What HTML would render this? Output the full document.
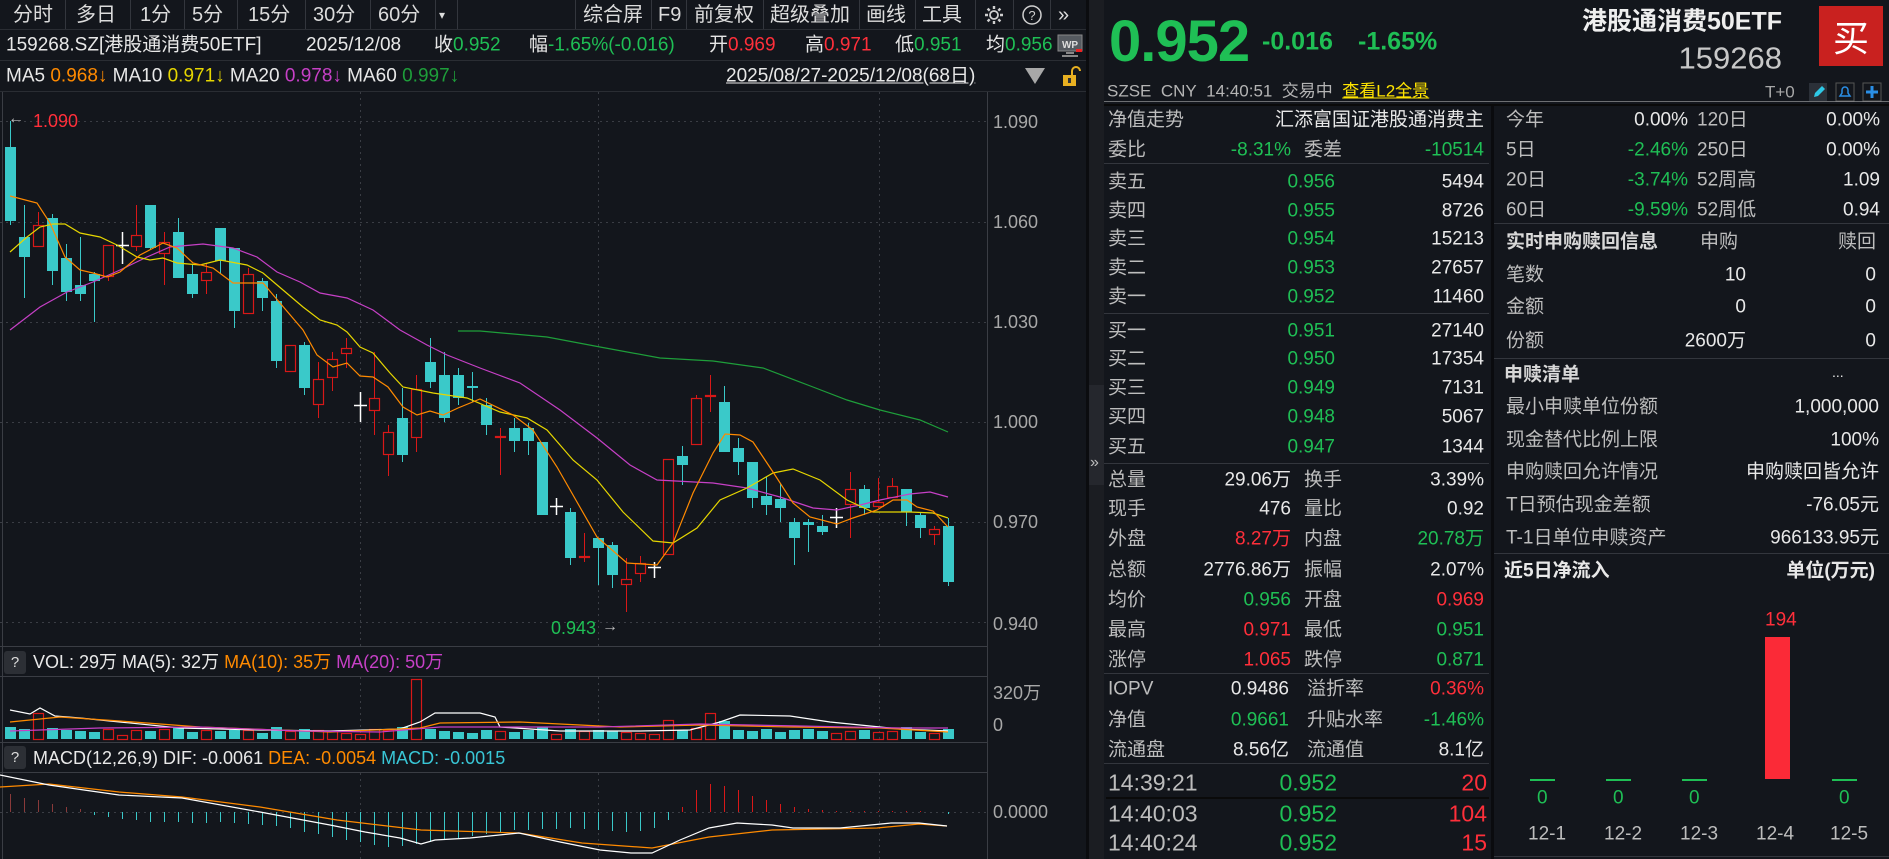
<!DOCTYPE html>
<html><head><meta charset="utf-8">
<style>
*{margin:0;padding:0;box-sizing:border-box}
body{width:1889px;height:859px;background:#13161c;overflow:hidden;position:relative;font-family:"Liberation Sans","Noto Sans CJK SC",sans-serif;color:#e6e6e6}
.t{position:absolute;white-space:nowrap;line-height:1;transform:translateY(-50%)}
.r{text-align:right}
.g{color:#1fbf55}.rd{color:#ff2f3a}.gy{color:#bdbdbd}.w{color:#e8e8e8}
.hl{position:absolute;height:1px;background:#33363d}
.vl{position:absolute;width:1px;background:#33363d}
.ob{font-size:19px}
</style></head><body>

<!-- toolbar -->
<div class="hl" style="left:0;top:29px;width:1086px;background:#2a2d33"></div>
<div class="vl" style="left:65px;top:0;height:29px"></div>
<div class="vl" style="left:130px;top:0;height:29px"></div>
<div class="vl" style="left:184px;top:0;height:29px"></div>
<div class="vl" style="left:237px;top:0;height:29px"></div>
<div class="vl" style="left:305px;top:0;height:29px"></div>
<div class="vl" style="left:370px;top:0;height:29px"></div>
<div class="vl" style="left:435px;top:0;height:29px"></div>
<div class="vl" style="left:457px;top:0;height:29px"></div>
<div class="vl" style="left:575px;top:0;height:29px"></div>
<div class="vl" style="left:651px;top:0;height:29px"></div>
<div class="vl" style="left:686px;top:0;height:29px"></div>
<div class="vl" style="left:763px;top:0;height:29px"></div>
<div class="vl" style="left:859px;top:0;height:29px"></div>
<div class="vl" style="left:915px;top:0;height:29px"></div>
<div class="vl" style="left:975px;top:0;height:29px"></div>
<div class="vl" style="left:1013px;top:0;height:29px"></div>
<div class="vl" style="left:1050px;top:0;height:29px"></div>
<div style="font-size:20px;color:#dcdcdc">
<span class="t" style="left:13px;top:15px">分时</span>
<span class="t" style="left:76px;top:15px">多日</span>
<span class="t" style="left:140px;top:15px">1分</span>
<span class="t" style="left:192px;top:15px">5分</span>
<span class="t" style="left:248px;top:15px">15分</span>
<span class="t" style="left:313px;top:15px">30分</span>
<span class="t" style="left:378px;top:15px">60分</span>
<span class="t" style="left:439px;top:15px;font-size:12px">▾</span>
<span class="t" style="left:583px;top:15px">综合屏</span>
<span class="t" style="left:658px;top:15px">F9</span>
<span class="t" style="left:694px;top:15px">前复权</span>
<span class="t" style="left:770px;top:15px">超级叠加</span>
<span class="t" style="left:866px;top:15px">画线</span>
<span class="t" style="left:922px;top:15px">工具</span>
<span class="t" style="left:1058px;top:15px">»</span>
</div>
<svg style="position:absolute;left:982px;top:4px" width="24" height="22" viewBox="0 0 24 22"><circle cx="12" cy="11" r="4" fill="none" stroke="#cfcfcf" stroke-width="1.8"/><path d="M12 2v3M12 17v3M3 11h3M18 11h3M5.6 4.6l2.1 2.1M16.3 15.3l2.1 2.1M5.6 17.4l2.1-2.1M16.3 6.7l2.1-2.1" stroke="#cfcfcf" stroke-width="2.4"/></svg>
<svg style="position:absolute;left:1020px;top:4px" width="24" height="22"><circle cx="12" cy="11" r="9" fill="none" stroke="#cfcfcf" stroke-width="1.5"/><text x="12" y="16" text-anchor="middle" font-size="13" fill="#cfcfcf" font-family="Liberation Sans">?</text></svg>

<!-- info line -->
<div style="font-size:19px">
<span class="t w" style="left:6px;top:45px">159268.SZ[港股通消费50ETF]</span>
<span class="t w" style="left:306px;top:45px">2025/12/08</span>
<span class="t" style="left:434px;top:45px">收<span class="g">0.952</span></span>
<span class="t" style="left:529px;top:45px">幅<span class="g">-1.65%(-0.016)</span></span>
<span class="t" style="left:709px;top:45px">开<span class="rd">0.969</span></span>
<span class="t" style="left:805px;top:45px">高<span class="rd">0.971</span></span>
<span class="t" style="left:895px;top:45px">低<span class="g">0.951</span></span>
<span class="t" style="left:986px;top:45px">均<span class="g">0.956</span></span>
</div>
<svg style="position:absolute;left:1056px;top:33px" width="28" height="26"><rect x="2" y="2" width="24" height="16" fill="#555a60" stroke="#888" /><text x="14" y="15" text-anchor="middle" font-size="10" font-weight="bold" fill="#ddd" font-family="Liberation Sans">WP</text><rect x="10" y="19" width="8" height="2" fill="#888"/><rect x="6" y="22" width="16" height="2" fill="#888"/><rect x="20" y="16" width="6" height="3" fill="#e22"/></svg>
<div class="hl" style="left:0;top:60px;width:1086px;background:#2a2d33"></div>
<div style="font-size:19px">
<span class="t w" style="left:6px;top:76px">MA5 <span style="color:#ff8a00">0.968↓</span> MA10 <span style="color:#e6d600">0.971↓</span> MA20 <span style="color:#c640c6">0.978↓</span> MA60 <span style="color:#1e9e3a">0.997↓</span></span>
<span class="t w" style="left:726px;top:76px;text-decoration:underline">2025/08/27-2025/12/08(68日)</span>
</div>
<svg style="position:absolute;left:1023px;top:65px" width="60" height="24"><path d="M2 3h20l-10 16z" fill="#a8a8a8"/><rect x="40" y="10" width="13" height="11" fill="#e8b021"/><path d="M49 10v-4a4 4 0 0 1 8 0" fill="none" stroke="#e8b021" stroke-width="2"/><rect x="45" y="13" width="3" height="5" fill="#333"/></svg>
<div class="hl" style="left:0;top:91px;width:1086px;background:#2a2d33"></div>

<!-- chart svg -->
<svg id="ch" style="position:absolute;left:0;top:0" width="1086" height="859"></svg>

<!-- axis labels -->
<div style="font-size:18px;color:#a8a8a8">
<span class="t" style="left:993px;top:122px">1.090</span>
<span class="t" style="left:993px;top:222px">1.060</span>
<span class="t" style="left:993px;top:322px">1.030</span>
<span class="t" style="left:993px;top:422px">1.000</span>
<span class="t" style="left:993px;top:522px">0.970</span>
<span class="t" style="left:993px;top:624px">0.940</span>
<span class="t" style="left:993px;top:693px">320万</span>
<span class="t" style="left:993px;top:725px">0</span>
<span class="t" style="left:993px;top:812px">0.0000</span>
</div>
<span class="t rd" style="left:33px;top:121px;font-size:18px">1.090</span>
<span class="t gy" style="left:8px;top:119px;font-size:16px">←</span>
<span class="t g" style="left:551px;top:628px;font-size:18px">0.943</span>
<span class="t gy" style="left:602px;top:627px;font-size:16px">→</span>

<!-- VOL / MACD headers -->
<div style="position:absolute;left:4px;top:651px;width:22px;height:23px;background:#2c2f35;border-radius:3px;color:#ddd;font-size:15px;text-align:center;line-height:23px">?</div>
<span class="t" style="left:33px;top:662px;font-size:18px"><span class="w">VOL: 29万 MA(5): 32万 </span><span style="color:#ff8a00">MA(10): 35万 </span><span style="color:#c640c6">MA(20): 50万</span></span>
<div style="position:absolute;left:4px;top:746px;width:22px;height:23px;background:#2c2f35;border-radius:3px;color:#ddd;font-size:15px;text-align:center;line-height:23px">?</div>
<span class="t" style="left:33px;top:758px;font-size:18px"><span class="w">MACD(12,26,9) DIF: -0.0061 </span><span style="color:#ff8a00">DEA: -0.0054 </span><span style="color:#39c6d6">MACD: -0.0015</span></span>

<!-- divider strip -->
<div style="position:absolute;left:1086px;top:0;width:3px;height:859px;background:#0b0c0f"></div>
<div style="position:absolute;left:1089px;top:0;width:15px;height:859px;background:#1b1d22"></div>
<div style="position:absolute;left:1089px;top:385px;width:15px;height:100px;background:#25272d"></div>
<span class="t gy" style="left:1090px;top:463px;font-size:16px">»</span>

<!-- right header -->
<span class="t g" style="left:1109px;top:42px;font-size:58px;font-weight:bold;letter-spacing:-1px">0.952</span>
<span class="t g" style="left:1262px;top:42px;font-size:25px;font-weight:bold">-0.016</span>
<span class="t g" style="left:1358px;top:42px;font-size:25px;font-weight:bold">-1.65%</span>
<span class="t r" style="right:107px;top:22px;font-size:25px;font-weight:bold;color:#eee">港股通消费50ETF</span>
<span class="t r" style="right:107px;top:58px;font-size:31px;color:#c8c8c8">159268</span>
<div style="position:absolute;left:1819px;top:6px;width:64px;height:60px;background:#c9211f;color:#fff;font-size:36px;text-align:center;line-height:60px;font-family:'Noto Sans CJK SC',sans-serif">买</div>
<span class="t" style="left:1107px;top:91px;font-size:17px;color:#b4b4b4">SZSE&nbsp; CNY&nbsp; 14:40:51&nbsp; 交易中&nbsp; <span style="color:#ffe400;text-decoration:underline">查看L2全景</span></span>
<span class="t" style="left:1765px;top:92px;font-size:17px;color:#a8a8a8">T+0</span>
<svg style="position:absolute;left:1809px;top:82px" width="76" height="20"><rect x="0" y="1" width="18" height="18" fill="#2b3038"/><path d="M5 15l1-4 7-7 3 3-7 7z" fill="#2ec8e6"/><rect x="27" y="1" width="18" height="18" fill="none" stroke="#555"/><path d="M31 14h10l-2-3v-3a3 3 0 0 0-6 0v3z" fill="none" stroke="#2a8fe6" stroke-width="1.5"/><rect x="54" y="1" width="18" height="18" fill="none" stroke="#555"/><path d="M63 4v12M57 10h12" stroke="#2a8fe6" stroke-width="3"/></svg>
<div class="hl" style="left:1104px;top:101px;width:785px;background:#c8c8c8;opacity:.5"></div>
<div class="hl" style="left:1104px;top:104px;width:785px;background:#0a0a0a;height:2px"></div>
<div class="vl" style="left:1491px;top:106px;height:753px;background:#0a0b0e;width:3px"></div>

<!-- order book column -->
<div class="ob">
<span class="t gy" style="left:1108px;top:120px">净值走势</span>
<span class="t r w" style="right:405px;top:120px">汇添富国证港股通消费主</span>
<span class="t gy" style="left:1108px;top:150px">委比</span>
<span class="t r g" style="right:598px;top:150px">-8.31%</span>
<span class="t gy" style="left:1304px;top:150px">委差</span>
<span class="t r g" style="right:405px;top:150px">-10514</span>
<div class="hl" style="left:1104px;top:163px;width:385px"></div>

<span class="t gy" style="left:1108px;top:182px">卖五</span><span class="t r g" style="right:554px;top:182px">0.956</span><span class="t r w" style="right:405px;top:182px">5494</span>
<span class="t gy" style="left:1108px;top:211px">卖四</span><span class="t r g" style="right:554px;top:211px">0.955</span><span class="t r w" style="right:405px;top:211px">8726</span>
<span class="t gy" style="left:1108px;top:239px">卖三</span><span class="t r g" style="right:554px;top:239px">0.954</span><span class="t r w" style="right:405px;top:239px">15213</span>
<span class="t gy" style="left:1108px;top:268px">卖二</span><span class="t r g" style="right:554px;top:268px">0.953</span><span class="t r w" style="right:405px;top:268px">27657</span>
<span class="t gy" style="left:1108px;top:297px">卖一</span><span class="t r g" style="right:554px;top:297px">0.952</span><span class="t r w" style="right:405px;top:297px">11460</span>
<div class="hl" style="left:1104px;top:313px;width:385px"></div>
<span class="t gy" style="left:1108px;top:331px">买一</span><span class="t r g" style="right:554px;top:331px">0.951</span><span class="t r w" style="right:405px;top:331px">27140</span>
<span class="t gy" style="left:1108px;top:359px">买二</span><span class="t r g" style="right:554px;top:359px">0.950</span><span class="t r w" style="right:405px;top:359px">17354</span>
<span class="t gy" style="left:1108px;top:388px">买三</span><span class="t r g" style="right:554px;top:388px">0.949</span><span class="t r w" style="right:405px;top:388px">7131</span>
<span class="t gy" style="left:1108px;top:417px">买四</span><span class="t r g" style="right:554px;top:417px">0.948</span><span class="t r w" style="right:405px;top:417px">5067</span>
<span class="t gy" style="left:1108px;top:447px">买五</span><span class="t r g" style="right:554px;top:447px">0.947</span><span class="t r w" style="right:405px;top:447px">1344</span>
<div class="hl" style="left:1104px;top:463px;width:385px"></div>

<span class="t gy" style="left:1108px;top:480px">总量</span><span class="t r w" style="right:598px;top:480px">29.06万</span><span class="t gy" style="left:1304px;top:480px">换手</span><span class="t r w" style="right:405px;top:480px">3.39%</span>
<span class="t gy" style="left:1108px;top:509px">现手</span><span class="t r w" style="right:598px;top:509px">476</span><span class="t gy" style="left:1304px;top:509px">量比</span><span class="t r w" style="right:405px;top:509px">0.92</span>
<span class="t gy" style="left:1108px;top:539px">外盘</span><span class="t r rd" style="right:598px;top:539px">8.27万</span><span class="t gy" style="left:1304px;top:539px">内盘</span><span class="t r g" style="right:405px;top:539px">20.78万</span>
<span class="t gy" style="left:1108px;top:570px">总额</span><span class="t r w" style="right:598px;top:570px">2776.86万</span><span class="t gy" style="left:1304px;top:570px">振幅</span><span class="t r w" style="right:405px;top:570px">2.07%</span>
<span class="t gy" style="left:1108px;top:600px">均价</span><span class="t r g" style="right:598px;top:600px">0.956</span><span class="t gy" style="left:1304px;top:600px">开盘</span><span class="t r rd" style="right:405px;top:600px">0.969</span>
<span class="t gy" style="left:1108px;top:630px">最高</span><span class="t r rd" style="right:598px;top:630px">0.971</span><span class="t gy" style="left:1304px;top:630px">最低</span><span class="t r g" style="right:405px;top:630px">0.951</span>
<span class="t gy" style="left:1108px;top:660px">涨停</span><span class="t r rd" style="right:598px;top:660px">1.065</span><span class="t gy" style="left:1304px;top:660px">跌停</span><span class="t r g" style="right:405px;top:660px">0.871</span>
<div class="hl" style="left:1104px;top:673px;width:385px"></div>

<span class="t gy" style="left:1108px;top:689px">IOPV</span><span class="t r w" style="right:600px;top:689px">0.9486</span><span class="t gy" style="left:1307px;top:689px">溢折率</span><span class="t r rd" style="right:405px;top:689px">0.36%</span>
<span class="t gy" style="left:1108px;top:720px">净值</span><span class="t r g" style="right:600px;top:720px">0.9661</span><span class="t gy" style="left:1307px;top:720px">升贴水率</span><span class="t r g" style="right:405px;top:720px">-1.46%</span>
<span class="t gy" style="left:1108px;top:750px">流通盘</span><span class="t r w" style="right:600px;top:750px">8.56亿</span><span class="t gy" style="left:1307px;top:750px">流通值</span><span class="t r w" style="right:405px;top:750px">8.1亿</span>
<div class="hl" style="left:1104px;top:763px;width:385px"></div>
</div>
<div style="font-size:23px">
<span class="t gy" style="left:1108px;top:783px">14:39:21</span><span class="t r g" style="right:552px;top:783px">0.952</span><span class="t r rd" style="right:402px;top:783px">20</span>
<div class="hl" style="left:1106px;top:797px;width:383px;background:#0a0a0a;height:2px"></div>
<span class="t gy" style="left:1108px;top:814px">14:40:03</span><span class="t r g" style="right:552px;top:814px">0.952</span><span class="t r rd" style="right:402px;top:814px">104</span>
<span class="t gy" style="left:1108px;top:843px">14:40:24</span><span class="t r g" style="right:552px;top:843px">0.952</span><span class="t r rd" style="right:402px;top:843px">15</span>
</div>

<!-- right column -->
<div class="ob">
<span class="t gy" style="left:1506px;top:120px">今年</span><span class="t r w" style="right:201px;top:120px">0.00%</span><span class="t gy" style="left:1697px;top:120px">120日</span><span class="t r w" style="right:9px;top:120px">0.00%</span>
<span class="t gy" style="left:1506px;top:150px">5日</span><span class="t r g" style="right:201px;top:150px">-2.46%</span><span class="t gy" style="left:1697px;top:150px">250日</span><span class="t r w" style="right:9px;top:150px">0.00%</span>
<span class="t gy" style="left:1506px;top:180px">20日</span><span class="t r g" style="right:201px;top:180px">-3.74%</span><span class="t gy" style="left:1697px;top:180px">52周高</span><span class="t r w" style="right:9px;top:180px">1.09</span>
<span class="t gy" style="left:1506px;top:210px">60日</span><span class="t r g" style="right:201px;top:210px">-9.59%</span><span class="t gy" style="left:1697px;top:210px">52周低</span><span class="t r w" style="right:9px;top:210px">0.94</span>
<div class="hl" style="left:1494px;top:223px;width:395px"></div>
<span class="t" style="left:1506px;top:242px;font-weight:bold;color:#d8d8d8">实时申购赎回信息</span><span class="t gy" style="left:1700px;top:242px">申购</span><span class="t r gy" style="right:13px;top:242px">赎回</span>
<span class="t gy" style="left:1506px;top:275px">笔数</span><span class="t r w" style="right:143px;top:275px">10</span><span class="t r w" style="right:13px;top:275px">0</span>
<span class="t gy" style="left:1506px;top:307px">金额</span><span class="t r w" style="right:143px;top:307px">0</span><span class="t r w" style="right:13px;top:307px">0</span>
<span class="t gy" style="left:1506px;top:341px">份额</span><span class="t r w" style="right:143px;top:341px">2600万</span><span class="t r w" style="right:13px;top:341px">0</span>
<div class="hl" style="left:1494px;top:358px;width:395px"></div>
<span class="t" style="left:1504px;top:375px;font-weight:bold;color:#d8d8d8">申赎清单</span><span class="t w" style="left:1832px;top:372px;font-size:14px">...</span>
<span class="t gy" style="left:1506px;top:407px">最小申赎单位份额</span><span class="t r w" style="right:10px;top:407px">1,000,000</span>
<span class="t gy" style="left:1506px;top:440px">现金替代比例上限</span><span class="t r w" style="right:10px;top:440px">100%</span>
<span class="t gy" style="left:1506px;top:472px">申购赎回允许情况</span><span class="t r w" style="right:10px;top:472px">申购赎回皆允许</span>
<span class="t gy" style="left:1506px;top:505px">T日预估现金差额</span><span class="t r w" style="right:10px;top:505px">-76.05元</span>
<span class="t gy" style="left:1506px;top:538px">T-1日单位申赎资产</span><span class="t r w" style="right:10px;top:538px">966133.95元</span>
<div class="hl" style="left:1494px;top:553px;width:395px"></div>
<span class="t" style="left:1504px;top:571px;font-weight:bold;color:#e8e8e8">近5日净流入</span><span class="t r" style="right:14px;top:571px;font-weight:bold;color:#e8e8e8">单位(万元)</span>
</div>
<div style="position:absolute;left:1530px;top:779px;width:25px;height:2px;background:#1fbf55"></div>
<div style="position:absolute;left:1606px;top:779px;width:25px;height:2px;background:#1fbf55"></div>
<div style="position:absolute;left:1682px;top:779px;width:25px;height:2px;background:#1fbf55"></div>
<div style="position:absolute;left:1832px;top:779px;width:25px;height:2px;background:#1fbf55"></div>
<div style="position:absolute;left:1765px;top:637px;width:25px;height:142px;background:#fb2a37"></div>
<div style="font-size:19px">
<span class="t rd" style="left:1765px;top:620px">194</span>
<span class="t g" style="left:1537px;top:798px">0</span>
<span class="t g" style="left:1613px;top:798px">0</span>
<span class="t g" style="left:1689px;top:798px">0</span>
<span class="t g" style="left:1839px;top:798px">0</span>
<span class="t gy" style="left:1528px;top:834px">12-1</span>
<span class="t gy" style="left:1604px;top:834px">12-2</span>
<span class="t gy" style="left:1680px;top:834px">12-3</span>
<span class="t gy" style="left:1756px;top:834px">12-4</span>
<span class="t gy" style="left:1830px;top:834px">12-5</span>
</div>
<div class="hl" style="left:1494px;top:856px;width:395px;background:#33363d"></div>

<script>
(function(){
var s=document.getElementById('ch'),h='';
function L(x1,y1,x2,y2,c,w,d){h+='<line x1="'+x1+'" y1="'+y1+'" x2="'+x2+'" y2="'+y2+'" stroke="'+c+'" stroke-width="'+(w||1)+'"'+(d?' stroke-dasharray="'+d+'"':'')+'/>';}
[121,222,322,422,522,622].forEach(function(y){L(0,y+.5,987,y+.5,'#3a3d44',1,'2 4');});
[360,598,879].forEach(function(x){L(x+.5,92,x+.5,646,'#3a3d44',1,'2 4');L(x+.5,677,x+.5,742,'#3a3d44',1,'2 4');L(x+.5,773,x+.5,859,'#3a3d44',1,'2 4');});
L(0,812.5,987,812.5,'#3a3d44',1,'2 4');
L(987.5,92,987.5,859,'#3a3d44',1);
L(0,646.5,987,646.5,'#3a3d44',1);L(0,676.5,987,676.5,'#3a3d44',1);
L(0,742.5,987,742.5,'#3a3d44',1);L(0,772.5,987,772.5,'#3a3d44',1);
L(2.5,92,2.5,859,'#3a3d44',1);
var C=[['c',147,221,121,225],['c',237,257,205,298],['r',225,247,212,247],['c',218,271,214,285],['c',258,292,244,301],['c',285,294,237,301],['c',274,281,272,322],['r',245,277,245,281],['w',245,245,232,264],['r',235,247,205,251],['c',205,248,205,250],['r',242,254,232,285],['c',232,278,218,278],['c',274,294,265,298],['r',272,281,263,294],['c',228,261,228,274],['c',248,311,248,328],['r',274,314,268,314],['c',281,298,278,311],['c',301,361,294,368],['r',345,372,345,372],['c',345,388,342,395],['r',379,405,362,418],['r',359,378,352,391],['r',348,354,338,368],['w',405,405,392,422],['r',398,411,352,435],['r',432,455,425,476],['c',418,455,388,462],['r',389,438,375,452],['c',362,382,338,388],['c',375,418,352,422],['c',375,398,368,405],['c',386,388,372,402],['c',405,425,398,435],['r',436,438,428,475],['c',428,441,418,452],['c',428,441,423,455],['c',442,515,442,515],['w',506,506,498,515],['c',512,558,508,565],['r',556,558,533,562],['c',538,548,538,585],['c',545,575,542,588],['r',579,585,558,612],['r',563,574,556,582],['w',567,567,562,578],['r',459,555,459,555],['c',456,465,446,485],['r',398,445,395,445],['r',395,397,375,412],['c',402,452,386,452],['c',448,462,438,475],['c',462,498,462,508],['c',496,505,477,515],['c',499,508,483,522],['c',522,538,518,565],['c',522,525,519,552],['c',526,532,515,535],['w',517,517,508,528],['r',489,505,472,538],['c',489,508,485,515],['r',502,507,478,508],['r',486,498,478,498],['c',489,512,489,526],['c',515,528,513,538],['r',529,535,526,545],['c',526,582,518,586]];
var cy='#3ac9c9',rd='#d81818';
C.forEach(function(k,i){var x=Math.round(9.7+14*i);
 if(k[0]=='w'){L(x+.5,k[3],x+.5,k[4],'#fff',1.5);L(x-6,k[1]+.5,x+7,k[1]+.5,'#fff',1.5);return;}
 var col=k[0]=='c'?cy:rd;
 L(x+.5,k[3],x+.5,k[1],col,1);L(x+.5,k[2],x+.5,k[4],col,1);
 var hh=Math.max(k[2]-k[1],2);
 if(k[0]=='c')h+='<rect x="'+(x-5)+'" y="'+k[1]+'" width="11" height="'+hh+'" fill="'+cy+'"/>';
 else h+='<rect x="'+(x-4.5)+'" y="'+(k[1]+.5)+'" width="10" height="'+Math.max(hh-1,1)+'" fill="none" stroke="'+rd+'" stroke-width="1.2"/>';
});
function P(pts,c){h+='<polyline fill="none" stroke="'+c+'" stroke-width="1.2" points="'+pts.map(function(p){return p.join(',')}).join(' ')+'"/>';}
P([[10,330],[27,317],[40,307],[67,292],[93,282],[120,270],[147,257],[170,247],[203,244],[233,248],[257,257],[277,272],[300,282],[320,293],[347,298],[373,310],[400,330],[427,345],[447,355],[480,368],[520,383],[560,410],[597,438],[630,465],[657,480],[713,483],[747,488],[780,497],[813,508],[837,510],[860,505],[880,500],[910,494],[930,492],[948,497]],'#c640c6');
P([[10,252],[27,237],[40,227],[53,224],[65,224],[80,233],[100,237],[117,245],[137,257],[150,260],[163,258],[177,263],[200,265],[220,260],[247,265],[263,273],[283,290],[303,307],[320,320],[337,325],[347,332],[360,347],[373,353],[390,373],[403,387],[433,393],[467,398],[500,412],[527,418],[547,430],[573,460],[597,480],[623,512],[653,541],[673,543],[697,528],[720,500],[747,488],[773,473],[793,469],[820,480],[847,500],[873,512],[910,512],[933,513],[948,518]],'#e6d600');
P([[10,196],[37,203],[50,223],[65,257],[80,270],[93,273],[107,277],[120,272],[140,255],[163,243],[177,248],[193,263],[213,268],[233,283],[263,283],[280,303],[303,330],[317,355],[333,367],[347,363],[360,376],[373,377],[388,387],[403,407],[417,415],[430,411],[443,415],[458,408],[480,399],[513,415],[533,430],[557,467],[597,537],[627,563],[657,565],[673,543],[693,493],[713,453],[725,434],[740,435],[753,442],[773,472],[793,503],[810,517],[837,524],[853,518],[877,510],[893,500],[907,500],[917,507],[933,511],[948,527]],'#ff8a00');
P([[458,331],[480,331],[547,337],[600,347],[660,358],[713,361],[763,368],[813,387],[847,400],[880,410],[920,420],[948,432]],'#1e9e3a');
var V=[12,10,26,11,9,8,7,10,4,9,8,10,12,7,9,8,9,9,6,12,8,10,9,8,6,5,10,9,12,60,10,8,7,6,9,8,7,9,12,5,10,8,9,8,7,6,5,19,9,11,26,18,9,8,10,7,9,10,8,6,8,9,7,8,12,7,6,10];
C.forEach(function(k,i){var x=Math.round(9.7+14*i),v=V[i];
 if(k[0]=='c')h+='<rect x="'+(x-5)+'" y="'+(739-v)+'" width="11" height="'+v+'" fill="'+cy+'"/>';
 else h+='<rect x="'+(x-4.5)+'" y="'+(739.5-v)+'" width="10" height="'+v+'" fill="none" stroke="'+rd+'" stroke-width="1.2"/>';});
P([[10,710],[30,714],[40,708],[55,716],[80,718],[120,722],[180,728],[260,730],[330,731],[400,729],[420,722],[435,713],[480,713],[495,717],[500,727],[560,731],[640,731],[690,730],[720,722],[740,715],[790,716],[830,722],[900,729],[948,731]],'#ffffff');
P([[10,722],[60,717],[120,721],[200,727],[330,732],[420,728],[440,723],[520,722],[620,727],[700,725],[790,727],[880,728],[948,732]],'#ff8a00');
P([[10,731],[100,728],[200,727],[300,731],[380,732],[440,727],[600,727],[700,724],[800,726],[900,728],[948,728]],'#c640c6');
var M=[18,14,12,8,5,3,-3,-5,-7,-8,-10,-10,-10,-11,-11,-10,-11,-12,-13,-14,-16,-20,-22,-25,-28,-30,-33,-35,-34,-32,-30,-28,-26,-24,-22,-20,-18,-18,-17,-17,-16,-17,-18,-19,-20,-19,-16,-8,5,22,28,26,22,16,12,8,5,3,2,1,1,1,1,1,1,1,0,-2];
M.forEach(function(m,i){var x=Math.round(9.7+14*i)+.5;L(x,812,x,812-m,m>=0?(i<8?'#8a3a3a':'#d81818'):cy,1);});
P([[0,787],[49,784],[119,792],[182,797],[260,807],[337,820],[421,830],[519,833],[582,843],[652,848],[709,837],[772,830],[877,828],[919,824],[947,826]],'#ff8a00');
P([[0,775],[49,785],[84,790],[119,795],[182,798],[260,812],[330,825],[365,832],[400,838],[421,844],[435,840],[470,838],[519,833],[560,842],[600,850],[631,853],[652,853],[680,840],[709,828],[737,823],[772,825],[793,828],[840,828],[891,823],[919,823],[947,826]],'#ffffff');
s.innerHTML=h;
})();
</script>
</body></html>
